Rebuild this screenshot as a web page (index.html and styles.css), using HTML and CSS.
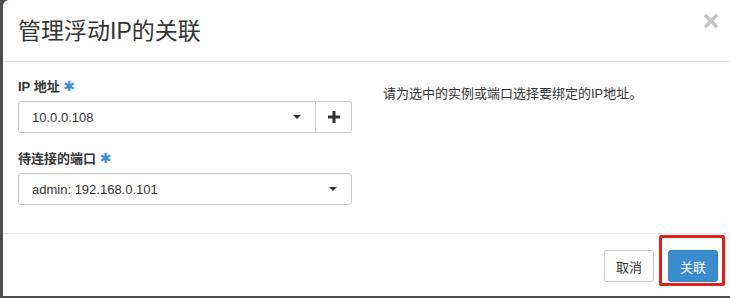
FILE: index.html
```html
<!DOCTYPE html>
<html>
<head>
<meta charset="utf-8">
<link rel="stylesheet" href="styles.css">
</head>
<body>
<div class="modal">
  <div class="modal-header">
    <h3 class="title">管理浮动IP的关联</h3>
    <span class="close">
      <svg width="14" height="14" viewBox="0 0 14 14"><path d="M2 2L12 12M12 2L2 12" stroke="#c4c4c4" stroke-width="3.6" stroke-linecap="round"/></svg>
    </span>
  </div>
  <div class="modal-body">
    <div class="left">
      <div class="field">
        <label class="label">IP 地址 <span class="req">&#x2731;</span></label>
        <div class="input-group">
          <div class="select grow"><span>10.0.0.108</span><span class="caret"></span></div>
          <div class="addon">
            <svg width="12" height="12" viewBox="0 0 12 12"><path d="M4.5 0h3v4.5H12v3H7.5V12h-3V7.5H0v-3h4.5z" fill="#333"/></svg>
          </div>
        </div>
      </div>
      <div class="field">
        <label class="label">待连接的端口 <span class="req">&#x2731;</span></label>
        <div class="select"><span>admin: 192.168.0.101</span><span class="caret"></span></div>
      </div>
    </div>
    <div class="right">
      <p class="help">请为选中的实例或端口选择要绑定的IP地址。</p>
    </div>
  </div>
  <div class="modal-footer">
    <button class="btn btn-default">取消</button>
    <span class="highlight"><button class="btn btn-primary">关联</button></span>
  </div>
</div>
</body>
</html>
```

FILE: styles.css
```css
* { box-sizing: border-box; }
html, body { margin: 0; padding: 0; }
body {
  width: 730px;
  height: 298px;
  background: #4d4d4d;
  font-family: "Liberation Sans", Arial, "Noto Sans CJK SC", sans-serif;
  font-size: 13px;
  color: #333;
  overflow: hidden;
}
.modal {
  margin-left: 3px;
  width: 727px;
  height: 296px;
  background: #fff;
  border-top-left-radius: 6px;
  display: flex;
  flex-direction: column;
}
.modal-header {
  height: 62px;
  border-bottom: 1px solid #e5e5e5;
  padding: 0 0 0 15px;
  display: flex;
  align-items: flex-start;
  justify-content: space-between;
}
.title {
  margin: 15px 0 0 0;
  font-size: 23px;
  font-weight: normal;
  line-height: 32px;
  color: #333;
}
.close {
  margin: 14px 12px 0 0;
  display: flex;
}
.modal-body {
  display: flex;
  padding: 15px 15px 0 15px;
  height: 172px;
  border-bottom: 1px solid #e5e5e5;
}
.left { width: 334px; }
.right { padding-left: 31px; flex: 1; }
.field { margin-bottom: 16px; }
.label {
  display: block;
  font-weight: bold;
  font-size: 13px;
  line-height: 18px;
  margin-bottom: 5px;
}
.req { color: #3a8fd1; font-size: 14px; font-weight: bold; font-family: "DejaVu Sans", sans-serif; }
.input-group { display: flex; }
.select {
  height: 32px;
  border: 1px solid #ccc;
  border-radius: 3px;
  padding: 0 14px 0 13px;
  display: flex;
  align-items: center;
  justify-content: space-between;
  font-size: 13px;
  color: #333;
  box-shadow: inset 0 1px 1px rgba(0,0,0,0.05);
}
.grow { flex: 1; border-radius: 3px 0 0 3px; }
.caret {
  width: 0; height: 0;
  border-left: 4px solid transparent;
  border-right: 4px solid transparent;
  border-top: 4px solid #333;
}
.addon {
  width: 36px;
  height: 32px;
  border: 1px solid #ccc;
  border-left: none;
  border-radius: 0 3px 3px 0;
  display: flex;
  align-items: center;
  justify-content: center;
}
.help { margin: 8px 0 0 0; font-size: 13px; line-height: 18px; color: #333; }
.modal-footer {
  flex: 1;
  display: flex;
  justify-content: flex-end;
  align-items: flex-start;
  padding: 1px 5px 0 0;
}
.btn {
  font-family: "Liberation Sans", Arial, "Noto Sans CJK SC", sans-serif;
  font-size: 13px;
  height: 32px;
  padding: 0 11px;
  border-radius: 3px;
  border: 1px solid #ccc;
  cursor: pointer;
}
.btn-default { background: #fff; color: #333; margin-top: 15px; }
.highlight {
  margin-left: 5px;
  border: 3px solid #e0201b;
  border-radius: 2px;
  padding: 12px 4px 1px 6px;
}
.btn-primary {
  background: #3c8dcd;
  border-color: #3481c0;
  color: #fff;
  display: block;
}
```
